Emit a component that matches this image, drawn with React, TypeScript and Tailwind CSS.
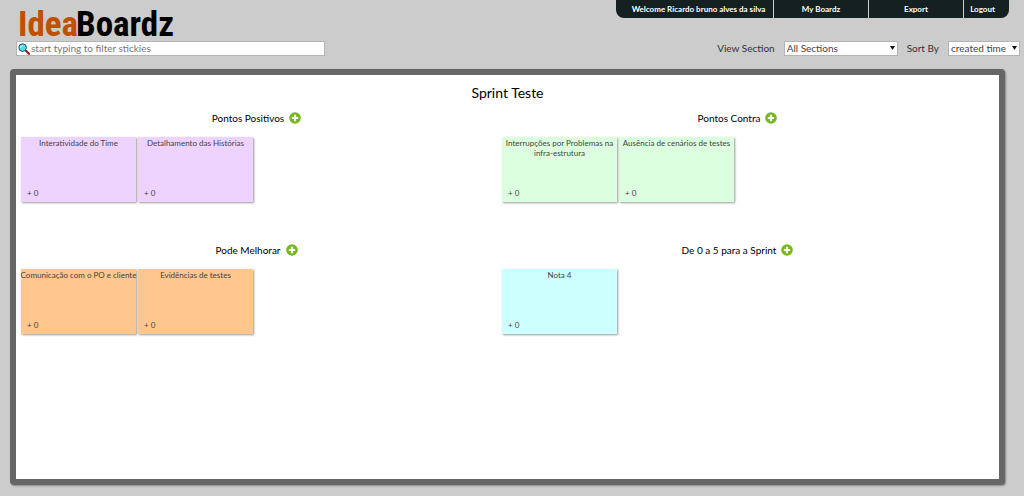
import React, { useState } from 'react';

interface Section {
  title: string;
  color: string;
  stickies: string[];
}

const sections: Section[] = [
  {
    title: 'Pontos Positivos',
    color: 'bg-[#eed3ff]',
    stickies: ['Interatividade do Time', 'Detalhamento das Histórias'],
  },
  {
    title: 'Pontos Contra',
    color: 'bg-[#dbffdf]',
    stickies: ['Interrupções por Problemas na infra-estrutura', 'Ausência de cenários de testes'],
  },
  {
    title: 'Pode Melhorar',
    color: 'bg-[#ffc68e]',
    stickies: ['Comunicação com o PO e cliente', 'Evidências de testes'],
  },
  {
    title: 'De 0 a 5 para a Sprint',
    color: 'bg-[#ccffff]',
    stickies: ['Nota 4'],
  },
];

const SearchIcon: React.FC = () => (
  <svg className="w-3 h-3 shrink-0" viewBox="0 0 12 12" fill="none">
    <path d="M7.2 7.2 8.6 8.4" stroke="#555" strokeWidth="1.6" />
    <path d="M8.4 8.2 11 10.8" stroke="#a01818" strokeWidth="2.2" strokeLinecap="round" />
    <circle cx="4.6" cy="4.6" r="3.8" fill="#4fdcf5" stroke="#27515c" strokeWidth="1" />
    <path d="M2.6 4.6c0-1.2.8-2 2-2" stroke="#d8faff" strokeWidth="1" strokeLinecap="round" />
  </svg>
);

const AddIcon: React.FC = () => (
  <svg className="block w-3 h-3" viewBox="0 0 12 12">
    <circle cx="6" cy="6" r="5.8" fill="#76b81c" />
    <path d="M6 2.8v6.4M2.8 6h6.4" stroke="#fff" strokeWidth="2.2" />
  </svg>
);

interface PickerProps {
  id: string;
  label: string;
  options: string[];
  width: string;
}

const Picker: React.FC<PickerProps> = ({ id, label, options, width }) => (
  <div className="flex items-center gap-[9px]">
    <label htmlFor={id} className="text-[10px] leading-[15px] text-[#333]">{label}</label>
    <div className={`relative ${width}`}>
      <select
        id={id}
        className="block appearance-none w-full h-[15px] pl-[2px] bg-white border border-[#b4b4b4] text-[10px] leading-[13px] text-[#444]"
      >
        {options.map((option) => (
          <option key={option}>{option}</option>
        ))}
      </select>
      <svg className="absolute right-[3px] top-[5px] w-[5px] h-1 pointer-events-none" viewBox="0 0 5 4">
        <path d="M0 0h5L2.5 4z" fill="#111" />
      </svg>
    </div>
  </div>
);

const Sticky: React.FC<{ text: string; color: string }> = ({ text, color }) => {
  const [votes, setVotes] = useState(0);

  return (
    <li className={`flex flex-col justify-between w-[115px] h-[65px] shadow-[1px_1px_2px_#999] ${color}`}>
      <p className="-mx-1 pt-[1px] text-center text-[8px] leading-[10px] text-[#444]">{text}</p>
      <button
        onClick={() => setVotes(votes + 1)}
        className="self-start px-[6px] pb-1 text-[8px] leading-[10px] text-[#444]"
      >
        + {votes}
      </button>
    </li>
  );
};

export default function App() {
  const [filter, setFilter] = useState('');
  const matches = (text: string) => text.toLowerCase().includes(filter.toLowerCase());

  return (
    <div className="flex flex-col min-h-screen bg-[#ccc] pb-[11px] font-['Lato',sans-serif]">
      {/* Logo and user menu */}
      <header className="flex justify-between items-start h-[41px] pl-[18px] pr-[15px]">
        <h1 className="pt-[7px] font-['Roboto_Condensed',sans-serif] font-bold text-[35px] leading-[36px]">
          <a href="#" className="flex text-black">
            <span className="text-[#c05000]">Idea</span>
            <span className="-ml-[2px]">Boardz</span>
          </a>
        </h1>
        <nav className="flex h-[18px] bg-[#152121] rounded-b-[8px] divide-x divide-[#ccc] text-center text-[8px] leading-[18px] font-bold text-white">
          <span className="w-[158px] pl-2">Welcome Ricardo bruno alves da silva</span>
          <a href="#" className="w-[95px]">My Boardz</a>
          <a href="#" className="w-[95px]">Export</a>
          <a href="#" className="w-[45px] pr-2">Logout</a>
        </nav>
      </header>

      {/* Filter bar */}
      <div className="flex justify-between items-center pl-4 pr-1">
        <div className="flex items-center gap-[1px] w-[309px] h-[15px] pl-[1px] bg-white border border-[#b4b4b4]">
          <SearchIcon />
          <input
            type="text"
            aria-label="Filter stickies"
            placeholder="start typing to filter stickies"
            value={filter}
            onChange={(e) => setFilter(e.target.value)}
            className="flex-1 min-w-0 text-[10px] leading-[13px] text-[#444] placeholder:text-[#777] focus:outline-none"
          />
        </div>
        <div className="flex items-center gap-[9px]">
          <Picker id="section" label="View Section" width="w-[114px]" options={['All Sections', ...sections.map((s) => s.title)]} />
          <Picker id="sort" label="Sort By" width="w-[72px]" options={['created time', 'votes']} />
        </div>
      </div>

      {/* Board */}
      <main className="flex-1 mt-[13px] ml-[10px] mr-[19px] pt-2 bg-white border-[6px] border-[#666] rounded-[4px] shadow-[1px_1px_2px_#888]">
        <h2 className="text-center text-[14px] leading-5">Sprint Teste</h2>
        <div className="grid grid-cols-2 gap-y-6 pr-[21px] pt-[3px]">
          {sections.map((section) => (
            <section key={section.title}>
              <div className="flex justify-center items-center gap-[5px] h-6">
                <h3 className="text-[10px] leading-4 text-black">{section.title}</h3>
                <button aria-label={`Add sticky to ${section.title}`}>
                  <AddIcon />
                </button>
              </div>
              <ul className="flex flex-wrap content-start gap-[2px] min-h-[84px] pl-[5px] pt-[7px]">
                {section.stickies.filter(matches).map((text) => (
                  <Sticky key={text} text={text} color={section.color} />
                ))}
              </ul>
            </section>
          ))}
        </div>
      </main>
    </div>
  );
}
